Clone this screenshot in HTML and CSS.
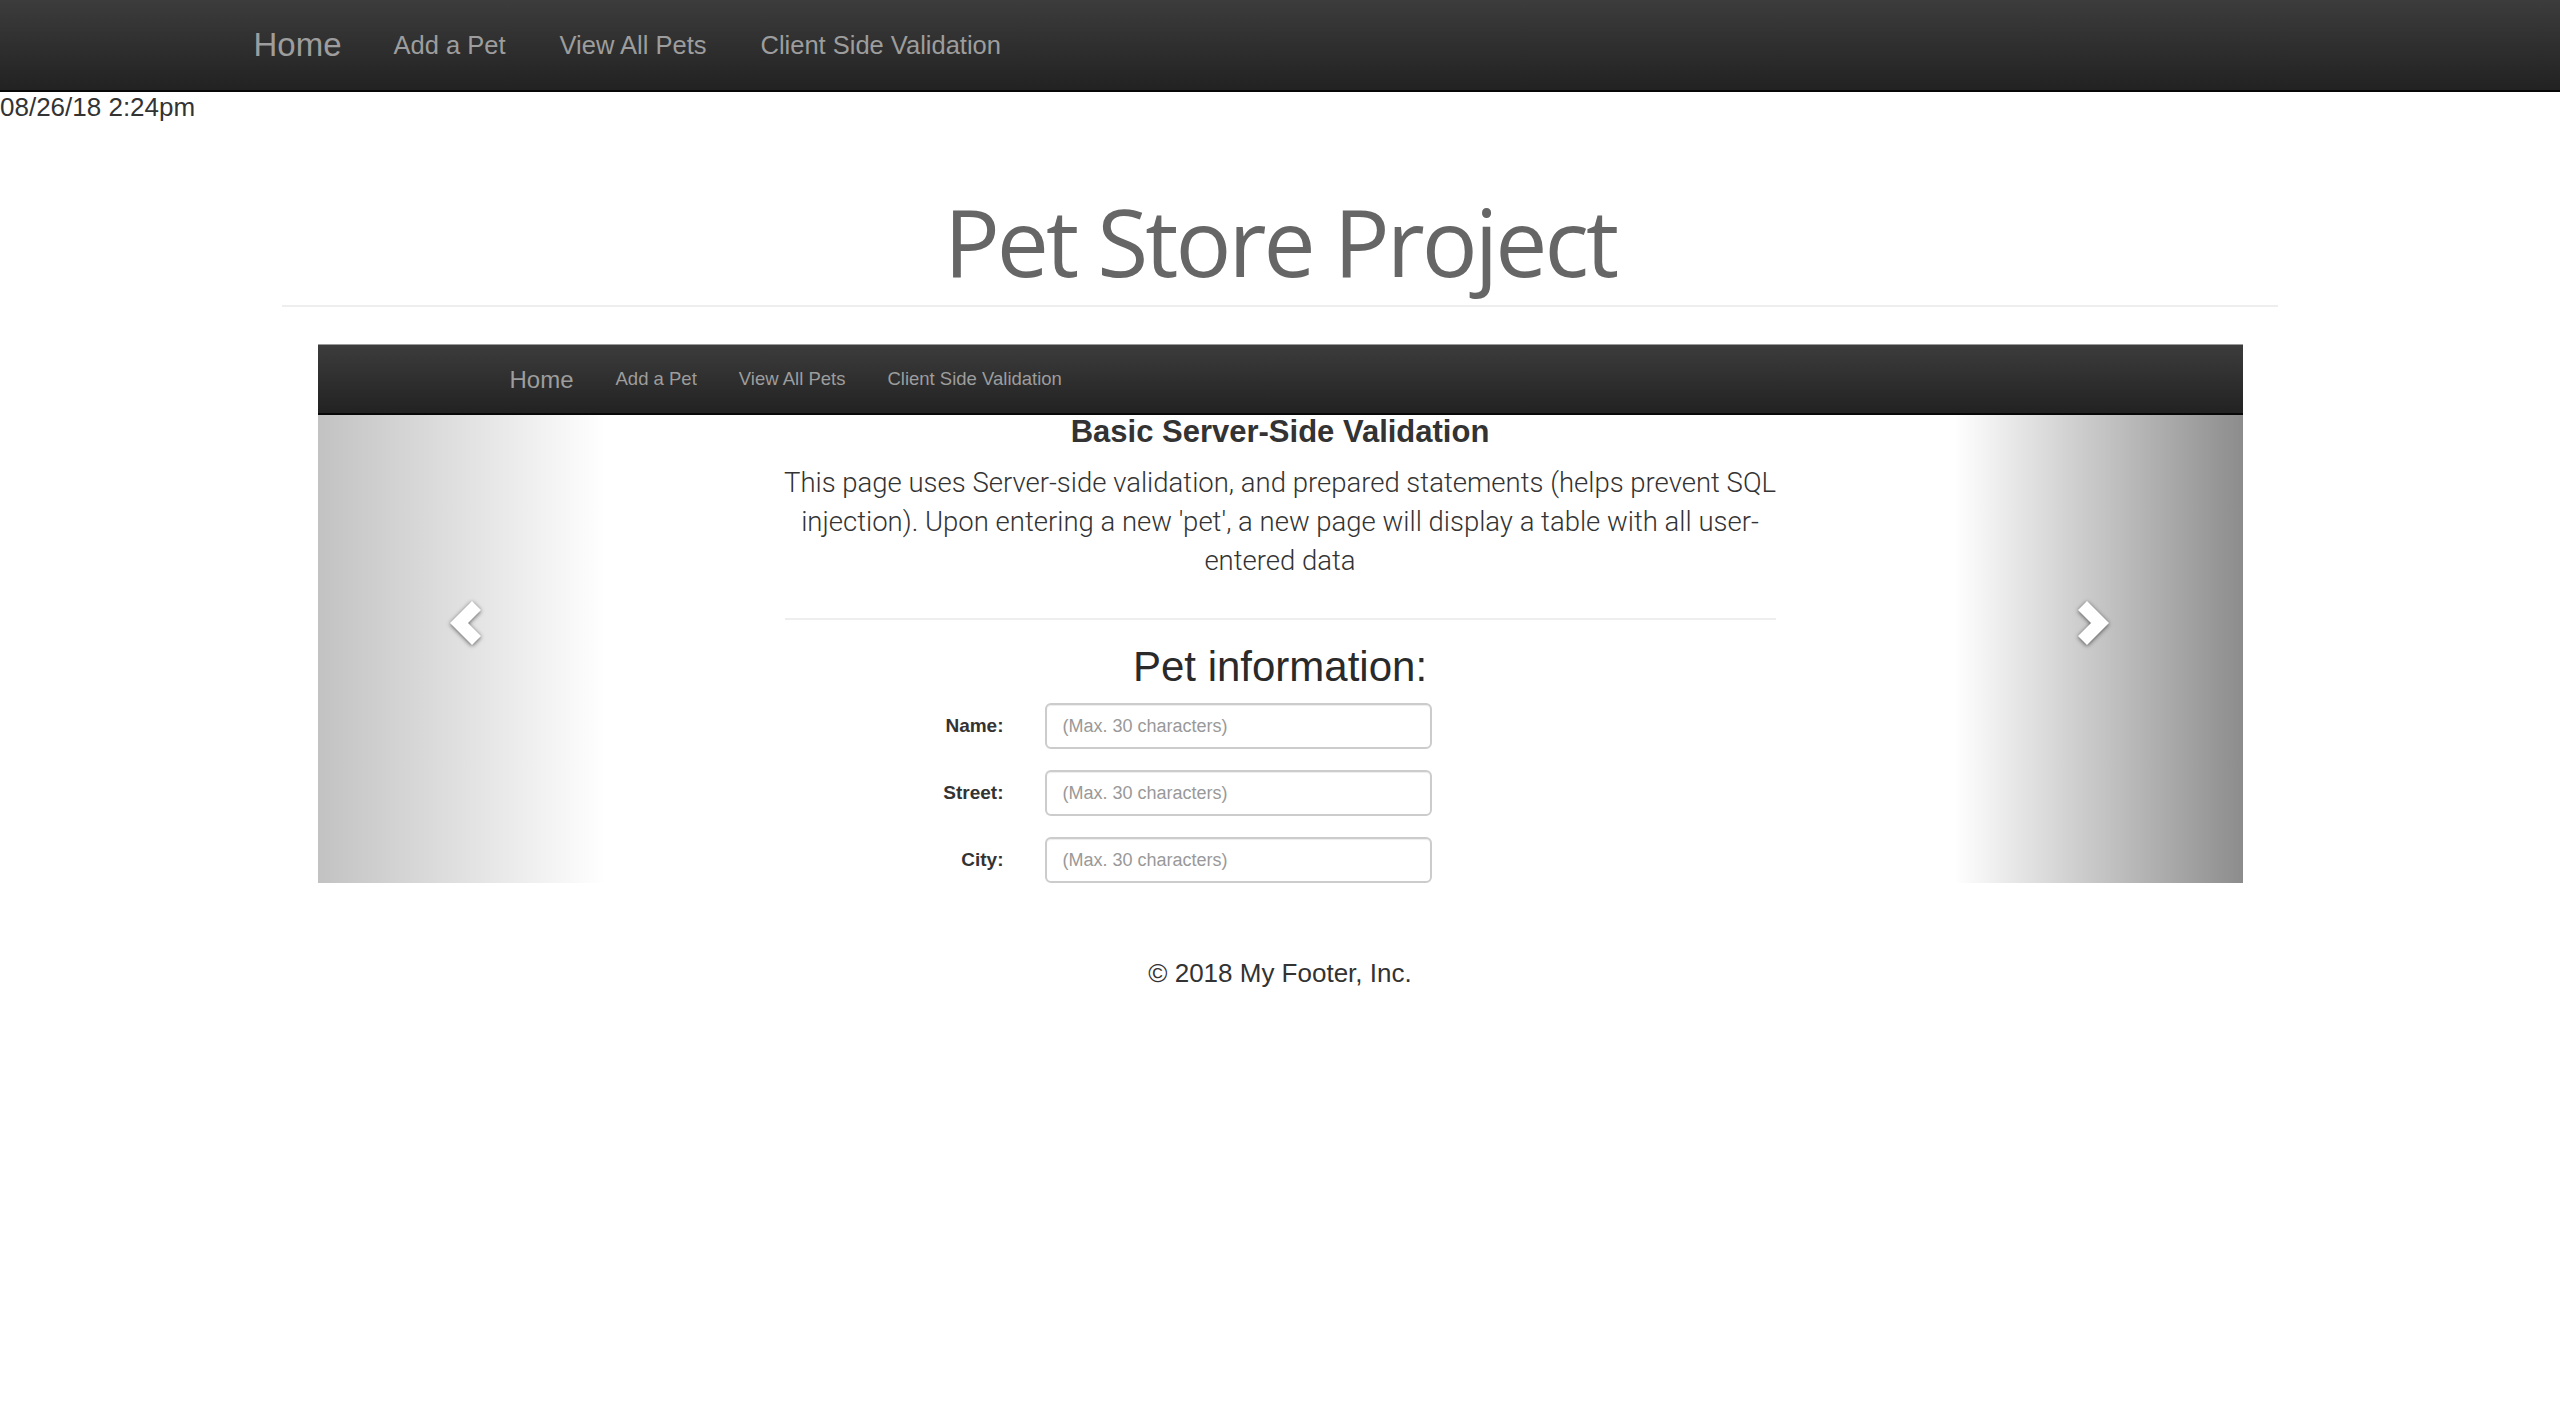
FILE: index.html
```html
<!DOCTYPE html>
<html lang="en">
<head>
<meta charset="utf-8">
<title>Pet Store Project</title>
<link rel="stylesheet" href="styles.css">
</head>
<body>
<nav class="topnav">
  <div class="topnav-inner">
    <a class="brand" href="#">Home</a>
    <a class="nav-link" href="#">Add a Pet</a>
    <a class="nav-link" href="#">View All Pets</a>
    <a class="nav-link" href="#">Client Side Validation</a>
  </div>
</nav>
<div class="timestamp">08/26/18 2:24pm</div>
<header class="page-header">
  <h1 class="page-title">Pet Store Project</h1>
</header>
<hr class="title-rule">
<section class="carousel">
  <nav class="subnav">
    <a class="sub-brand" href="#">Home</a>
    <a class="sub-link" href="#">Add a Pet</a>
    <a class="sub-link" href="#">View All Pets</a>
    <a class="sub-link" href="#">Client Side Validation</a>
  </nav>
  <div class="slide">
    <div class="slide-content">
      <h3 class="slide-heading">Basic Server-Side Validation</h3>
      <p class="slide-text">This page uses Server-side validation, and prepared statements (helps prevent SQL injection). Upon entering a new 'pet', a new page will display a table with all user-entered data</p>
      <hr class="slide-rule">
      <h2 class="form-heading">Pet information:</h2>
      <form class="pet-form">
        <div class="form-row">
          <label class="form-label" for="name">Name:</label>
          <input class="form-input" id="name" type="text" placeholder="(Max. 30 characters)">
        </div>
        <div class="form-row">
          <label class="form-label" for="street">Street:</label>
          <input class="form-input" id="street" type="text" placeholder="(Max. 30 characters)">
        </div>
        <div class="form-row">
          <label class="form-label" for="city">City:</label>
          <input class="form-input" id="city" type="text" placeholder="(Max. 30 characters)">
        </div>
      </form>
    </div>
  </div>
  <a class="control control-left" href="#">
    <svg class="chevron" width="36" height="48" viewBox="0 0 36 48"><polygon points="34,11 25,2 3,24 25,46 34,37 21,24" fill="#fff"/></svg>
  </a>
  <a class="control control-right" href="#">
    <svg class="chevron" width="36" height="48" viewBox="0 0 36 48"><polygon points="2,11 11,2 33,24 11,46 2,37 15,24" fill="#fff"/></svg>
  </a>
</section>
<footer class="footer">© 2018 My Footer, Inc.</footer>
</body>
</html>
```
FILE: styles.css
```css
html, body {
  margin: 0;
  padding: 0;
  background: #fff;
}
body {
  font-family: "Liberation Sans", Arial, Helvetica, sans-serif;
  font-size: 26px;
  color: #333;
}
a { text-decoration: none; }

.topnav {
  height: 90px;
  background: linear-gradient(to bottom, #3c3c3c 0%, #222 100%);
  border-bottom: 2px solid #080808;
}
.topnav-inner {
  height: 100%;
  width: 2165px;
  margin: 0 auto;
  padding: 0 28px;
  box-sizing: border-box;
  display: flex;
  align-items: center;
}
.brand {
  font-size: 33px;
  color: #9d9d9d;
  padding: 0 25px 0 28px;
}
.nav-link {
  font-size: 25.5px;
  color: #9d9d9d;
  padding: 0 27px;
}

.timestamp {
  font-size: 26px;
  line-height: 30px;
  color: #333;
}

.page-header {
  text-align: center;
  margin-top: 67px;
}
.page-title {
  margin: 0;
  font-family: "Open Sans", "DejaVu Sans", sans-serif;
  font-weight: 400;
  font-size: 93px;
  line-height: 104px;
  color: #666;
  letter-spacing: -3px;
}
.title-rule {
  width: 1996px;
  margin: 12px auto 0;
  border: 0;
  border-top: 2px solid #eee;
}

.carousel {
  position: relative;
  width: 1925px;
  margin: 37px auto 0;
}
.subnav {
  position: relative;
  z-index: 2;
  height: 68px;
  display: flex;
  align-items: center;
  padding-left: 171px;
  background: linear-gradient(to bottom, #3c3c3c 0%, #222 100%);
  border-top: 1px solid #9a9a9a;
  border-bottom: 2px solid #080808;
}
.sub-brand {
  font-size: 24px;
  color: #9d9d9d;
  padding: 0 21px;
  position: relative;
  top: 1px;
}
.sub-link {
  font-size: 18.5px;
  color: #9d9d9d;
  padding: 0 21px;
}

.slide {
  height: 468px;
  overflow: hidden;
}
.slide-content {
  width: 991px;
  margin: 0 auto;
  text-align: center;
}
.slide-heading {
  margin: 0;
  font-size: 31px;
  font-weight: 700;
  line-height: 34px;
  color: #333;
}
.slide-text {
  margin: 14px -10px 0;
  font-family: "Roboto", "Liberation Sans", sans-serif;
  font-weight: 300;
  font-size: 27.5px;
  line-height: 39px;
  color: #333;
}
.slide-rule {
  margin: 38px 0 0;
  border: 0;
  border-top: 2px solid #eee;
}
.form-heading {
  margin: 24px 0 0;
  font-size: 42px;
  font-weight: 400;
  line-height: 46px;
  color: #2a2a2a;
}
.pet-form {
  margin-top: 13px;
  text-align: left;
}
.form-row {
  display: grid;
  grid-template-columns: 219px 387px;
  column-gap: 41px;
  align-items: center;
  margin-bottom: 21px;
}
.form-label {
  text-align: right;
  font-size: 19px;
  font-weight: 700;
  color: #333;
}
.form-input {
  height: 46px;
  box-sizing: border-box;
  border: 2px solid #ccc;
  border-radius: 6px;
  padding: 0 16px;
  font-family: "Liberation Sans", Arial, sans-serif;
  font-size: 18px;
  color: #555;
  box-shadow: inset 0 1px 1px rgba(0,0,0,.075);
  background: #fff;
}
.form-input::placeholder {
  color: #999;
}

.control {
  position: absolute;
  top: 0;
  bottom: 0;
  width: 15%;
  box-sizing: border-box;
  padding-top: 18px;
  display: flex;
  align-items: center;
  justify-content: center;
  z-index: 1;
}
.control-left {
  left: 0;
  padding-left: 6px;
  background: linear-gradient(to right, rgba(0,0,0,.24) 0%, rgba(0,0,0,0) 100%);
}
.control-right {
  right: 0;
  padding-right: 8px;
  background: linear-gradient(to right, rgba(0,0,0,0) 0%, rgba(0,0,0,.45) 100%);
}
.chevron {
  filter: drop-shadow(0 1px 2px rgba(0,0,0,.6));
}

.footer {
  margin-top: 72px;
  text-align: center;
  font-size: 26px;
  line-height: 37px;
  color: #333;
}
```
